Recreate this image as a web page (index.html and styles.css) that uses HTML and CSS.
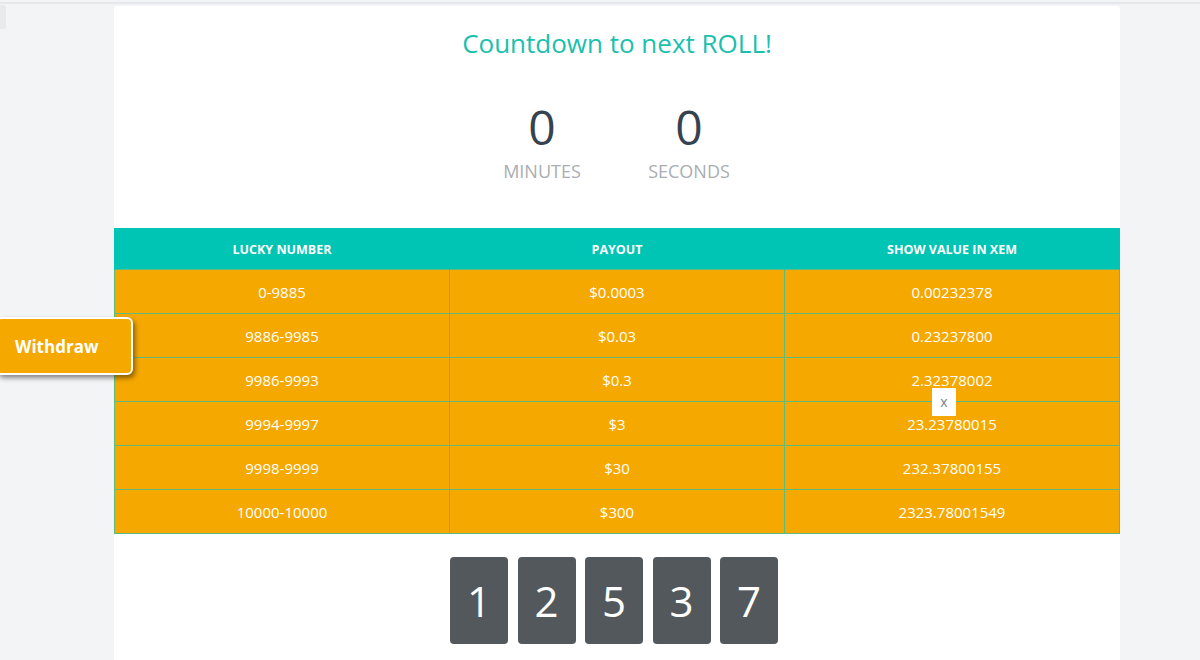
FILE: index.html
```html
<!DOCTYPE html>
<html>
<head>
<meta charset="utf-8">
<link rel="stylesheet" href="styles.css">
</head>
<body>
<div class="topbar"></div>
<div class="side-tab"></div>
<main class="card">
  <h1 class="title">Countdown to next ROLL!</h1>
  <div class="countdown">
    <div class="unit"><div class="num">0</div><div class="label">MINUTES</div></div>
    <div class="unit"><div class="num">0</div><div class="label">SECONDS</div></div>
  </div>
  <table class="payouts">
    <thead>
      <tr><th>LUCKY NUMBER</th><th>PAYOUT</th><th>SHOW VALUE IN XEM</th></tr>
    </thead>
    <tbody>
      <tr><td>0-9885</td><td>$0.0003</td><td>0.00232378</td></tr>
      <tr><td>9886-9985</td><td>$0.03</td><td>0.23237800</td></tr>
      <tr><td>9986-9993</td><td>$0.3</td><td>2.32378002</td></tr>
      <tr><td>9994-9997</td><td>$3</td><td>23.23780015</td></tr>
      <tr><td>9998-9999</td><td>$30</td><td>232.37800155</td></tr>
      <tr><td>10000-10000</td><td>$300</td><td>2323.78001549</td></tr>
    </tbody>
  </table>
  <div class="digits">
    <div class="digit">1</div>
    <div class="digit">2</div>
    <div class="digit">5</div>
    <div class="digit">3</div>
    <div class="digit">7</div>
  </div>
</main>
<button class="withdraw">Withdraw</button>
<div class="close-box">x</div>
</body>
</html>
```
FILE: styles.css
```css
html, body {
  margin: 0;
  padding: 0;
  background: #f3f4f6;
  font-family: "Open Sans", "Noto Sans", sans-serif;
  overflow: hidden;
  height: 660px;
}
.topbar {
  height: 2px;
  margin-top: 2px;
  margin-bottom: 2px;
  background: #e6e7ea;
}
.side-tab {
  position: absolute;
  left: 0;
  top: 5px;
  width: 6px;
  height: 24px;
  background: #e9eaec;
  border-radius: 0 2px 2px 0;
}
.card {
  margin-left: 114px;
  width: 1006px;
  height: 654px;
  background: #ffffff;
  border-radius: 3px 3px 0 0;
  padding-top: 20px;
  box-sizing: border-box;
}
.title {
  margin: 0;
  text-align: center;
  font-weight: 400;
  font-size: 26px;
  line-height: 34px;
  color: #1abfae;
}
.countdown {
  display: flex;
  justify-content: center;
  gap: 37px;
  margin-top: 39px;
  margin-left: -3px;
}
.unit {
  width: 110px;
  text-align: center;
}
.num {
  font-size: 48px;
  line-height: 56px;
  color: #36434f;
}
.label {
  margin-top: 4px;
  font-size: 18px;
  line-height: 24px;
  color: #a9adb1;
}
.payouts {
  margin-top: 45px;
  width: 1006px;
  border-collapse: collapse;
  table-layout: fixed;
}
.payouts th {
  background: #00c4b4;
  color: #ffffff;
  font-size: 12.5px;
  font-weight: 700;
  height: 40px;
  padding: 0;
  border: 1px solid #00c4b4;
  border-bottom: 0;
}
.payouts td {
  background: #f5a800;
  color: #ffffff;
  font-size: 15px;
  text-align: center;
  height: 43px;
  padding: 0;
  border: 1px solid #5fba7d;
}
.digits {
  display: flex;
  justify-content: center;
  gap: 9.5px;
  margin-top: 23px;
  margin-left: -6px;
}
.digit {
  width: 58px;
  height: 87px;
  border-radius: 4px;
  background: #52585c;
  color: #ffffff;
  font-size: 42px;
  display: flex;
  align-items: center;
  justify-content: center;
}
.withdraw {
  position: absolute;
  left: -4px;
  top: 317px;
  width: 137px;
  height: 58px;
  background: #f5a800;
  border: 2px solid #ffffff;
  border-radius: 6px;
  box-shadow: 2px 3px 5px rgba(0, 0, 0, 0.45);
  color: #ffffff;
  font-family: "Open Sans", "Noto Sans", sans-serif;
  font-weight: 700;
  font-size: 17px;
  text-align: left;
  padding: 0 0 0 17px;
}
.close-box {
  position: absolute;
  left: 932px;
  top: 388px;
  width: 24px;
  height: 28px;
  background: #ffffff;
  color: #7a7f88;
  font-size: 14px;
  line-height: 28px;
  text-align: center;
}
```
